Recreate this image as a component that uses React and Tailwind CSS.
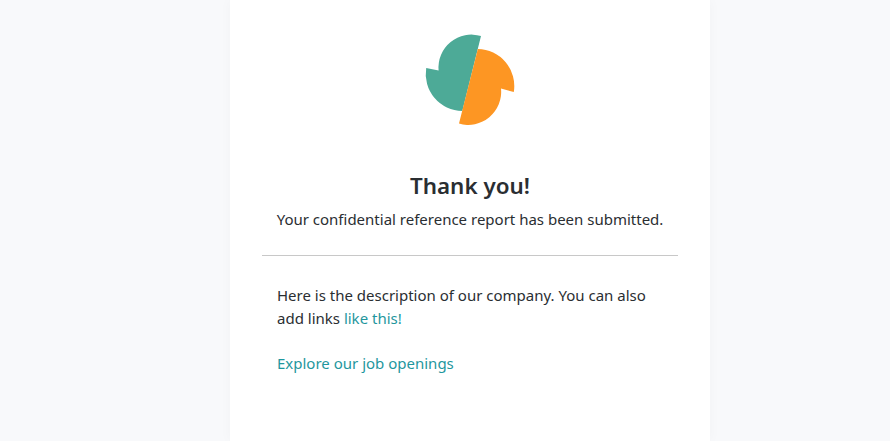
export default function App() {
  return (
    <div className="h-[441px] overflow-hidden bg-[#f8f9fb] flex justify-center pl-[50px]" style={{ fontFamily: '"Noto Sans", "Open Sans", sans-serif' }}>
      <div className="w-[480px] h-[441px] bg-white shadow-[0_0_12px_rgba(0,0,0,0.03)] flex flex-col px-8 text-[#2a2e32]">
        <div className="flex justify-center pt-[35px] h-[125px]">
          <svg width="90" height="90" viewBox="425 35 90 90" className="overflow-visible">
            <path d="M481 36 L462.3 111 A37 37 0 0 1 426.2 68 L438.6 70.5 A33 33 0 0 1 481 36 Z" fill="#4daa97" />
            <path d="M459 123.6 L477.8 49 A37 37 0 0 1 513.8 92 L501 88.5 A33 33 0 0 1 459 123.6 Z" fill="#fd9623" />
          </svg>
        </div>
        <h1 className="mt-[45px] text-center text-[22.4px] leading-[32px] font-semibold">Thank you!</h1>
        <p className="mt-[5px] text-center text-[15px] leading-[24px] whitespace-nowrap">Your confidential reference report has been submitted.</p>
        <hr className="mt-[24px] border-0 border-t border-[#c8c8c8]" />
        <div className="mt-[28px] px-[15px] text-[15px] leading-[23px]">
          <p>Here is the description of our company. You can also<br />add links <a className="text-[#1f979e]">like this!</a></p>
          <p className="mt-[22px]"><a className="text-[#1f979e]">Explore our job openings</a></p>
        </div>
      </div>
    </div>
  );
}
